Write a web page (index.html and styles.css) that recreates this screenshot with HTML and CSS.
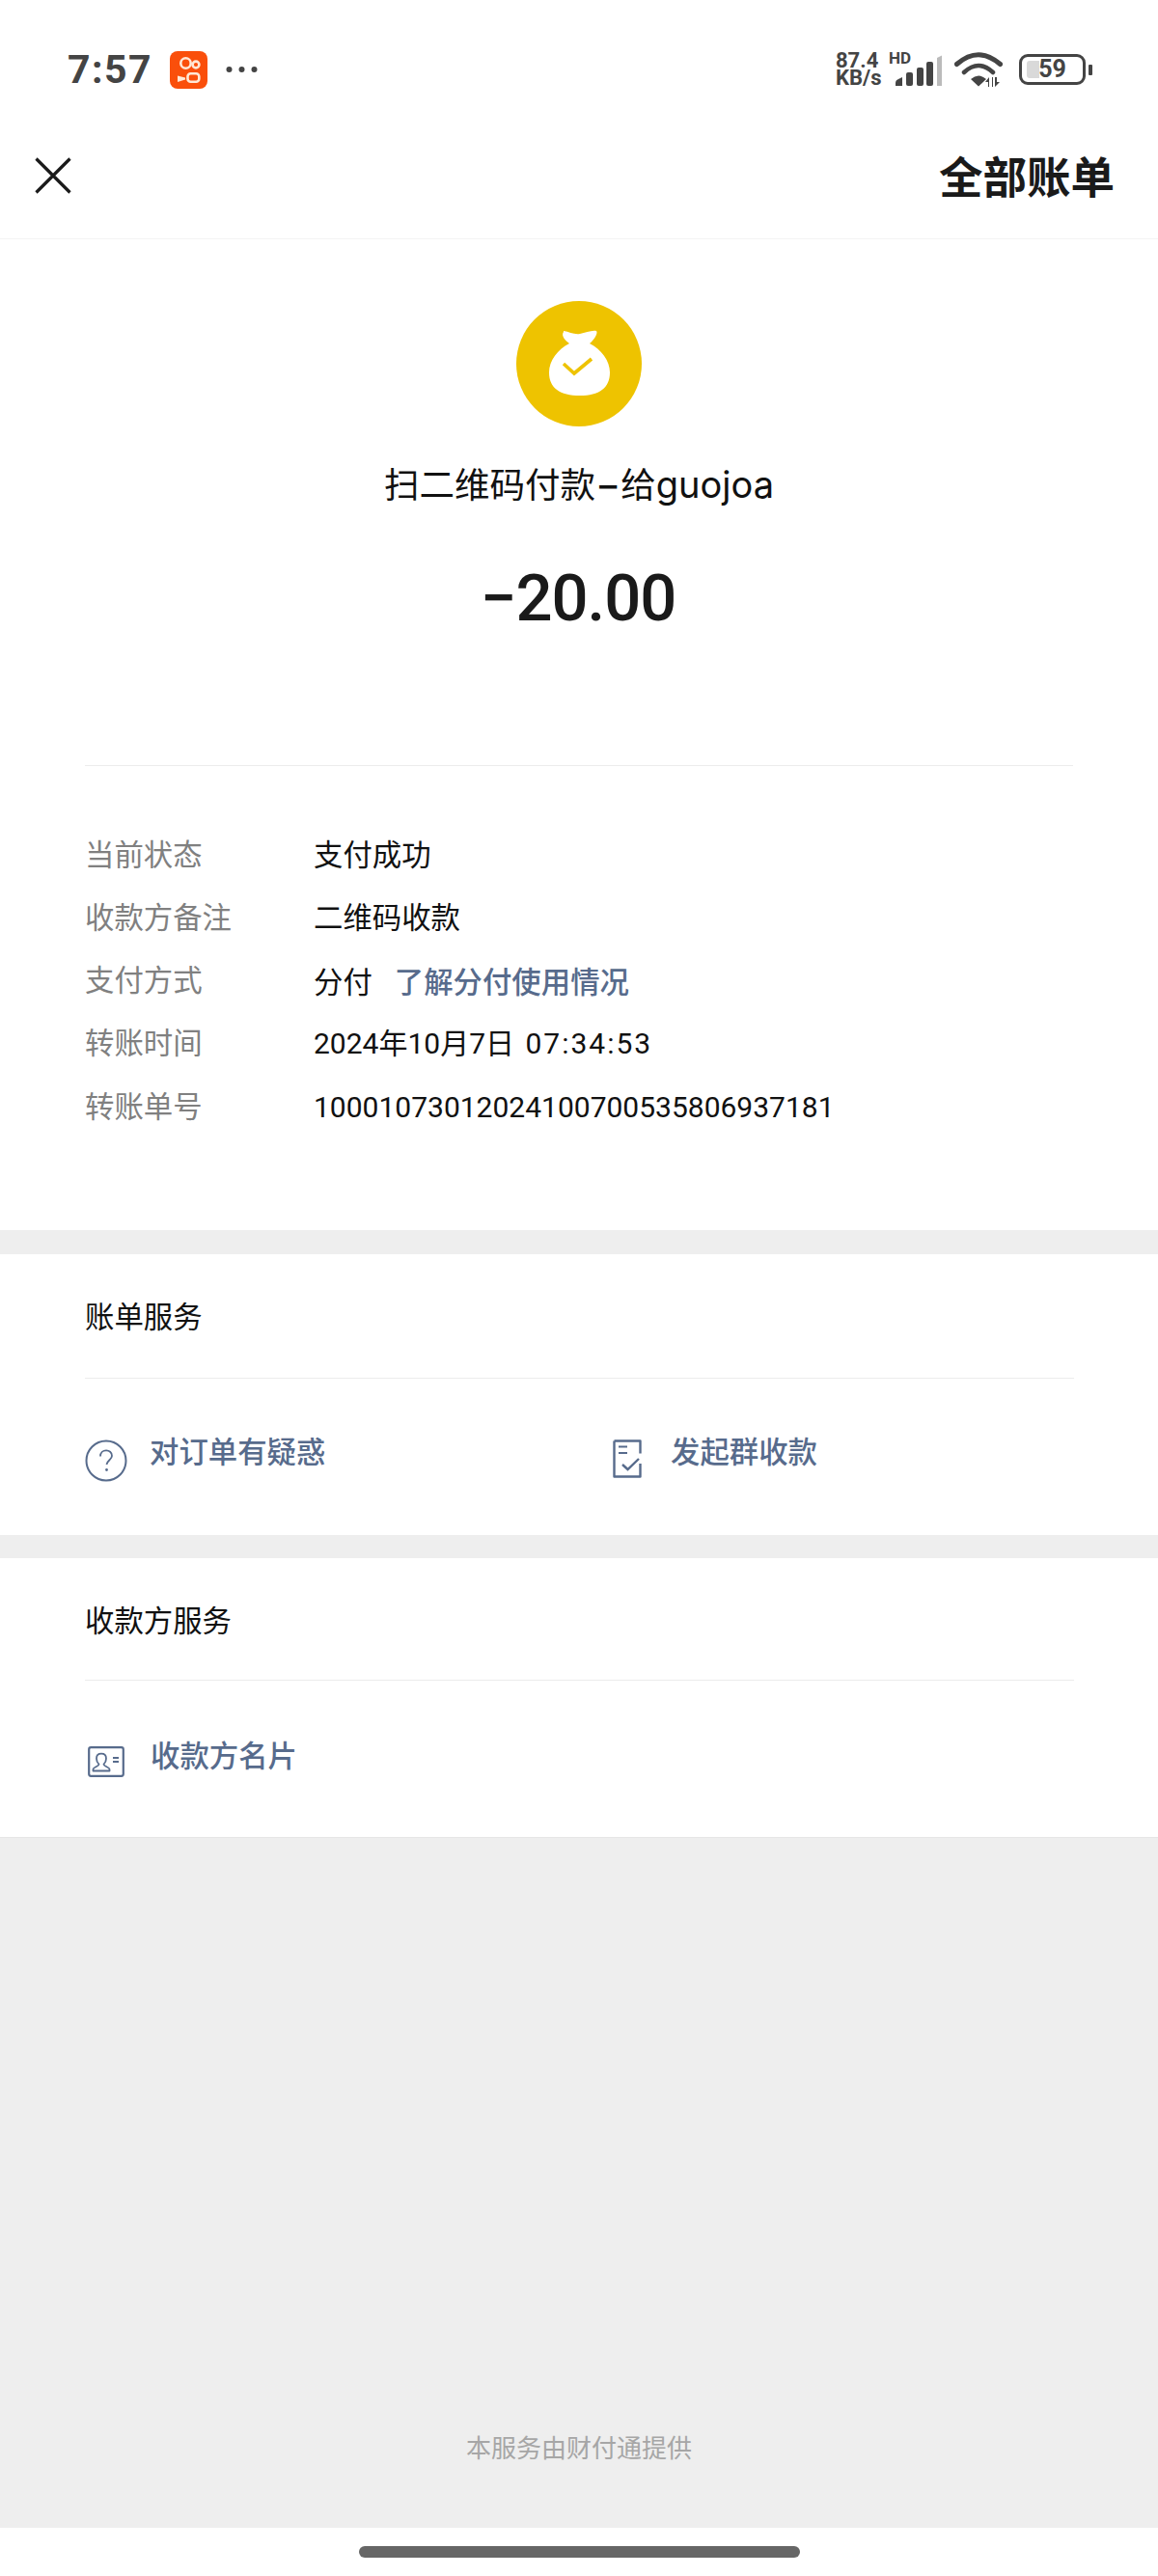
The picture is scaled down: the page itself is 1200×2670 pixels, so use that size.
FILE: index.html
```html
<!DOCTYPE html>
<html lang="zh-CN">
<head>
<meta charset="utf-8">
<title>全部账单</title>
<link rel="stylesheet" href="styles.css">
</head>
<body>
<div class="page">
  <header class="top">
    <div class="status">
      <div class="status-left">
        <span class="time">7:57</span>
        <svg class="app-icon" viewBox="0 0 39 39"><rect width="39" height="39" rx="8" fill="#fa4f0b"/><g fill="none" stroke="#ffe8d6" stroke-width="2.600"><circle cx="16.500" cy="12.500" r="5.200"/><circle cx="27" cy="14" r="3.400"/><rect x="18.500" y="23.300" width="11.800" height="8.400" rx="3"/></g><path d="M8 25.500L16 27.500v2L8 32z" fill="#ffe8d6"/></svg>
        <svg class="dots" viewBox="0 0 34 8"><circle cx="3.500" cy="4" r="3" fill="#444"/><circle cx="16.500" cy="4" r="3" fill="#444"/><circle cx="29.500" cy="4" r="3" fill="#444"/></svg>
      </div>
      <div class="status-right">
        <div class="speed"><span>87.4</span><span>KB/s</span></div>
        <div class="signal">
          <span class="hd">HD</span>
          <svg class="bars" viewBox="0 0 49 32"><path d="M0 32v-3q0-3 3-4l4-2v9z" fill="#444"/><rect x="11" y="18" width="7" height="14" rx="2" fill="#444"/><rect x="22" y="13" width="7" height="19" rx="2" fill="#444"/><rect x="32" y="7" width="7" height="25" rx="2" fill="#444"/><path d="M43 32V3l5-2.500V32z" fill="#bbb"/></svg>
        </div>
        <svg class="wifi" viewBox="0 0 50 38"><g fill="none" stroke="#444" stroke-linecap="round"><path d="M2.500 13.500Q25-6 47.500 13.500" stroke-width="5"/><path d="M10 22Q25 8 40 22" stroke-width="4.500"/></g><path d="M17 29Q25 22 33 29L25 36.500z" fill="#444"/><path d="M35 37v-5h-3l4-5v10zM39 27v10l0 0 1 0v-10zM42 27h2v5h3l-5 5z" fill="#444"/></svg>
        <div class="battery">
          <div class="cell"><span class="cell-fill"></span><span class="cell-num">59</span></div>
          <span class="nub"></span>
        </div>
      </div>
    </div>
    <nav class="nav">
      <svg class="close" viewBox="0 0 38 38"><path d="M1.500 1.500L36.500 36.500M36.500 1.500L1.500 36.500" stroke="#1a1a1a" stroke-width="3.200" fill="none"/></svg>
      <span class="nav-title">全部账单</span>
    </nav>
  </header>

  <section class="hero">
    <svg class="bag" viewBox="0 0 130 130"><circle cx="65" cy="65" r="65" fill="#eec300"/><path d="M49 31C55 32 60 35 66 34C72 33 78 30 83 31C85 33 81 40 76 44C88 50 97 62 97 74C97 90 86 98 66 98C45 98 34 90 34 74C34 62 43 50 55 44C51 41 46 36 49 32Z" fill="#fff"/><path d="M49 65L60 75L78 60" fill="none" stroke="#eec300" stroke-width="3.600"/></svg>
    <h1 class="hero-title">扫二维码付款<span class="dash">–</span>给<span class="latin">guojoa</span></h1>
    <div class="amount">−20.00</div>
  </section>

  <section class="details">
    <div class="rows">
      <div class="row"><span class="label">当前状态</span><span class="value value-cn">支付成功</span></div>
      <div class="row"><span class="label">收款方备注</span><span class="value value-cn">二维码收款</span></div>
      <div class="row"><span class="label">支付方式</span><span class="value value-cn">分付<a class="link link-gap">了解分付使用情况</a></span></div>
      <div class="row"><span class="label">转账时间</span><span class="value">2024年10月7日 <span class="clock">07:34:53</span></span></div>
      <div class="row"><span class="label">转账单号</span><span class="value">10001073012024100700535806937181</span></div>
    </div>
  </section>

  <section class="card">
    <h2 class="card-title">账单服务</h2>
    <div class="items items-two">
      <div class="item">
        <svg class="ic ic-help" viewBox="0 0 44 44"><circle cx="22" cy="22" r="20.500" fill="none" stroke="#576b8c" stroke-width="2"/><path d="M16 17.500c0-8 12-8 12-.5 0 4-5.500 5-5.500 9" fill="none" stroke="#576b8c" stroke-width="1.800"/><circle cx="22.500" cy="31.500" r="1.400" fill="#576b8c"/></svg>
        <a class="link">对订单有疑惑</a>
      </div>
      <div class="item">
        <span class="ic-slot"><svg class="ic ic-doc" viewBox="0 0 30 40"><path d="M1.500 1.500h27v13M28.500 25v13.500h-27v-37" fill="none" stroke="#576b8c" stroke-width="2.400" stroke-linejoin="round"/><path d="M6 7.500h9M6 14h9" stroke="#576b8c" stroke-width="2.200"/><path d="M10 26l5.500 5 11.500-11" fill="none" stroke="#576b8c" stroke-width="2.400"/></svg></span>
        <a class="link">发起群收款</a>
      </div>
    </div>
  </section>

  <section class="card card-last">
    <h2 class="card-title">收款方服务</h2>
    <div class="items">
      <div class="item">
        <svg class="ic ic-card" viewBox="0 0 38 32"><rect x="1.200" y="1.200" width="35.600" height="29.600" rx="2" fill="none" stroke="#576b8c" stroke-width="2.200"/><path d="M5.500 25.500v-1.800c0-2 6-3 6-5-2-2-2.500-4-2.500-6 0-3 2-5 5-5s5 2 5 5c0 2-.5 4-2.500 6 0 2 6 3 6 5v1.800z" fill="none" stroke="#576b8c" stroke-width="1.800" stroke-linejoin="round"/><path d="M26 12h6M26 16h6" stroke="#576b8c" stroke-width="1.800"/></svg>
        <a class="link">收款方名片</a>
      </div>
    </div>
  </section>

  <footer class="foot">本服务由财付通提供</footer>
  <div class="home"><span class="home-bar"></span></div>
</div>
</body>
</html>
```

FILE: styles.css
```css
* { box-sizing: border-box; }
html, body { margin: 0; padding: 0; }
body {
  background: #fff;
  font-family: Roboto, "Noto Sans CJK SC", sans-serif;
  color: #111;
}
.page {
  width: 1200px;
  height: 2670px;
  display: flex;
  flex-direction: column;
  background: #fff;
  overflow: hidden;
}

/* top */
.top { height: 248px; border-bottom: 1px solid #f4f4f4; }
.status {
  height: 144px;
  padding: 0 68px 0 70px;
  display: flex;
  align-items: center;
  justify-content: space-between;
}
.status-left { display: flex; align-items: center; }
.time { font-size: 41px; font-weight: 700; color: #444; letter-spacing: 1.500px; line-height: 44px; width: 106px; }
.app-icon { width: 39px; height: 39px; display: block; }
.dots { width: 34px; height: 8px; margin-left: 19px; display: block; }
.status-right { display: flex; align-items: center; }
.speed {
  display: flex;
  flex-direction: column;
  font-size: 22px;
  line-height: 18px;
  font-weight: 700;
  color: #444;
  width: 62px;
}
.signal { position: relative; width: 61px; height: 36px; }
.hd {
  position: absolute;
  left: -7px;
  top: -1px;
  font-size: 17px;
  line-height: 14px;
  font-weight: 700;
  color: #444;
}
.bars { width: 49px; height: 32px; display: block; position: absolute; left: 0; top: 3px; }
.wifi { width: 50px; height: 38px; display: block; margin-right: 17px; }
.battery { display: flex; align-items: center; gap: 3px; }
.cell {
  position: relative;
  width: 69px;
  height: 32px;
  border: 3px solid #444;
  border-radius: 9px;
  display: flex;
  align-items: center;
  justify-content: center;
}
.cell-fill { position: absolute; left: 5px; top: 4px; bottom: 4px; width: 13px; background: #d9d9d9; border-radius: 3px 0 0 3px; }
.cell-num { position: relative; font-size: 25px; font-weight: 700; color: #444; line-height: 26px; }
.nub { width: 4px; height: 11px; background: #444; border-radius: 1px; }

.nav {
  height: 76px;
  padding: 0 45px 0 36px;
  display: flex;
  align-items: center;
  justify-content: space-between;
}
.close { width: 38px; height: 38px; display: block; }
.nav-title { font-size: 45.500px; font-weight: 700; color: #1a1a1a; font-family: "Noto Sans CJK SC", sans-serif; line-height: 60px; margin-bottom: 3px; }

/* hero */
.hero {
  height: 546px;
  margin: 0 88px;
  padding-top: 64px;
  border-bottom: 1px solid #ececec;
  display: flex;
  flex-direction: column;
  align-items: center;
}
.bag { width: 130px; height: 130px; display: block; }
.hero-title {
  margin: 34px 0 0;
  font-family: "Noto Sans CJK SC", sans-serif;
  font-size: 36.500px;
  font-weight: 400;
  line-height: 50px;
  color: #111;
  white-space: nowrap;
}
.dash { font-family: Inter, sans-serif; font-weight: 500; margin: 0 4px; }
.latin { font-family: Inter, sans-serif; font-size: 38px; }
.amount {
  margin: 54px 2px 0 0;
  font-size: 67px;
  line-height: 76px;
  font-weight: 500;
  color: #1a1a1a;
  letter-spacing: -1px;
}

/* details */
.details {
  height: 506px;
  padding: 60px 88px 0;
  border-bottom: 25px solid #eee;
}
.row {
  height: 65.250px;
  display: flex;
  align-items: center;
  font-size: 30px;
  line-height: 40px;
}
.label { width: 237px; color: #808080; font-size: 30.400px; }
.value { color: #111; white-space: nowrap; }
.value-cn { font-size: 30.400px; }
.clock { letter-spacing: 2px; margin-left: 4px; }
.link { color: #576b8c; font-size: 30.400px; line-height: 40px; font-family: "Noto Sans CJK SC", sans-serif; font-weight: 500; }
.link-gap { margin-left: 23px; }

/* cards */
.card {
  height: 315px;
  padding: 0 87px 0 88px;
  border-bottom: 24px solid #eee;
}
.card-last { height: 289px; border-bottom: 0; }
.card-title {
  margin: 0;
  height: 129px;
  padding-top: 43px;
  font-size: 30.400px;
  font-weight: 400;
  line-height: 40px;
  color: #111;
  font-family: "Noto Sans CJK SC", sans-serif;
  border-bottom: 1px solid #ececec;
}
.card-last .card-title { height: 127px; }
.items { padding-top: 54px; display: flex; }
.card-last .items { padding-top: 56px; }
.items-two { display: grid; grid-template-columns: 537px 1fr; }
.item { display: flex; align-items: flex-start; }
.ic { display: block; }
.ic-help { width: 44px; height: 44px; margin: 9px 23px 0 0; }
.ic-slot { width: 70px; display: block; padding: 9px 0 0 10px; }
.ic-doc { width: 30px; height: 40px; }
.ic-card { width: 38px; height: 32px; margin: 12px 27px 0 3px; }

/* foot */
.foot {
  flex: 1;
  background: #eee;
  border-top: 1px solid #e6e6e6;
  display: flex;
  align-items: flex-end;
  justify-content: center;
  padding-bottom: 64px;
  font-size: 26px;
  line-height: 40px;
  color: #a6a6a6;
  font-family: "Noto Sans CJK SC", sans-serif;
}
.home { height: 50px; display: flex; align-items: center; justify-content: center; }
.home-bar { width: 457px; height: 12px; border-radius: 6px; background: #666; display: block; }
```
